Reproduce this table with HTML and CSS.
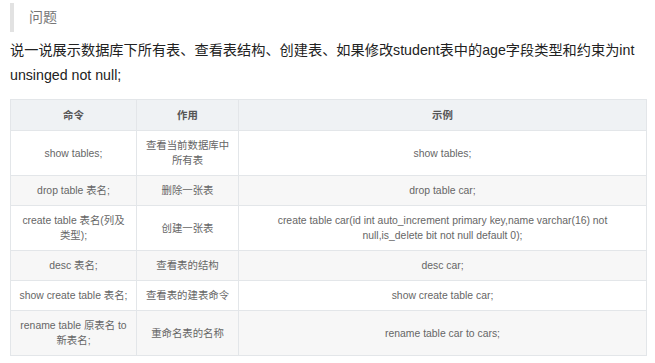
FILE: index.html
```html
<!DOCTYPE html>
<html lang="zh-CN">
<head>
  <meta charset="UTF-8">
  <meta name="viewport" content="width=device-width, initial-scale=1.0">
  <title>问题</title>
  <link rel="stylesheet" href="styles.css">
</head>
<body>
  <blockquote class="note">问题</blockquote>
  <p class="question">说一说展示数据库下所有表、查看表结构、创建表、如果修改student表中的age字段类型和约束为int unsinged not null;</p>

  <table class="cmd-table">
    <colgroup>
      <col class="col-cmd">
      <col class="col-use">
      <col class="col-demo">
    </colgroup>
    <thead>
      <tr>
        <th>命令</th>
        <th>作用</th>
        <th>示例</th>
      </tr>
    </thead>
    <tbody>
      <tr>
        <td>show tables;</td>
        <td>查看当前数据库中所有表</td>
        <td class="demo">show tables;</td>
      </tr>
      <tr>
        <td>drop table 表名;</td>
        <td>删除一张表</td>
        <td class="demo">drop table car;</td>
      </tr>
      <tr>
        <td>create table 表名(列及类型);</td>
        <td>创建一张表</td>
        <td class="demo">create table car(id int auto_increment primary key,name varchar(16) not null,is_delete bit not null default 0);</td>
      </tr>
      <tr>
        <td>desc 表名;</td>
        <td>查看表的结构</td>
        <td class="demo">desc car;</td>
      </tr>
      <tr>
        <td>show create table 表名;</td>
        <td>查看表的建表命令</td>
        <td class="demo">show create table car;</td>
      </tr>
      <tr>
        <td>rename table 原表名 to 新表名;</td>
        <td>重命名表的名称</td>
        <td class="demo">rename table car to cars;</td>
      </tr>
    </tbody>
  </table>
</body>
</html>
```

FILE: styles.css
```css
body {
  margin: 0;
  padding: 0 0 0 10px;
  background: #fff;
  font-family: "Liberation Sans", Arial, "Noto Sans CJK SC", sans-serif;
  color: #222;
}
.note {
  margin: 3px 0 0 0;
  padding-left: 15px;
  border-left: 4px solid #e2e2e2;
  height: 29px;
  line-height: 29px;
  font-size: 14px;
  color: #777;
}
.question {
  margin: 6px 0 11px 0;
  font-size: 14.2px;
  line-height: 25px;
  color: #222;
}
.cmd-table {
  width: 637px;
  table-layout: fixed;
  border-collapse: collapse;
  font-family: "Liberation Sans", Arial, "Noto Sans CJK SC", sans-serif;
  font-size: 10.4px;
  line-height: 15px;
  color: #666;
}
.col-cmd {
  width: 126px;
}
.col-use {
  width: 102px;
}
.cmd-table th,
.cmd-table td {
  border: 1px solid #e3e6e9;
  padding: 7px 8px;
  text-align: center;
  vertical-align: middle;
}
.cmd-table td.demo {
  padding-left: 20px;
  padding-right: 20px;
}
.cmd-table th {
  padding-top: 8px;
  background-color: #eff2f4;
  color: #555;
  font-weight: bold;
}
.cmd-table tbody tr:nth-child(even) td {
  background-color: #f7f7f7;
}
```
